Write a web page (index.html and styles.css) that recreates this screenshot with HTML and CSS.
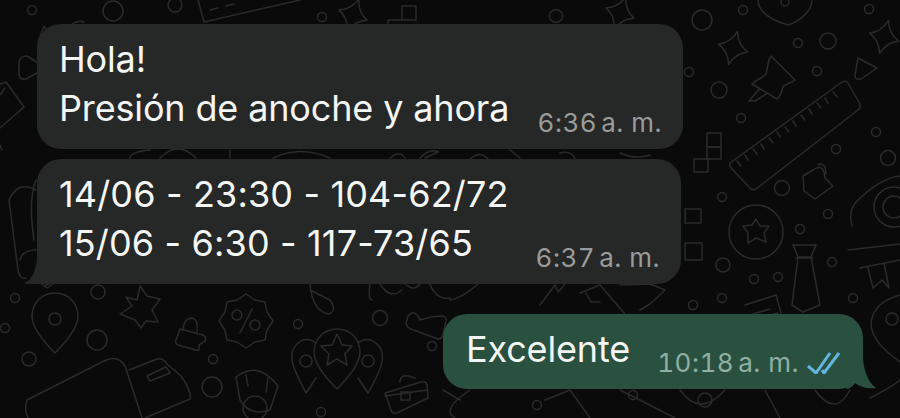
FILE: index.html
```html
<!DOCTYPE html>
<html lang="es">
  <head>
    <meta charset="UTF-8" />
    <meta name="viewport" content="width=device-width, initial-scale=1.0" />
    <title>Chat</title>
    <link rel="stylesheet" href="styles.css">
  </head>
  <body>
    <svg class="doodles" width="900" height="418" viewBox="0 0 900 418" fill="none" aria-hidden="true">
      <defs>
        <path id="sparkle" d="M0 -17 Q4 -4 15 0 Q4 4 0 17 Q-4 4 -15 0 Q-4 -4 0 -17Z" />
        <path id="drop" d="M0 -30 C14 -30 23 -19 23 -7 C23 6 10 20 0 30 C-10 20 -23 6 -23 -7 C-23 -19 -14 -30 0 -30Z" />
      </defs>
      <!-- small rings -->
      <circle cx="32" cy="10" r="4.5" />
      <circle cx="113" cy="11" r="10" />
      <circle cx="175" cy="5" r="7" />
      <circle cx="322" cy="17" r="4.5" />
      <circle cx="556" cy="16" r="6.5" />
      <circle cx="689" cy="72" r="4.5" />
      <circle cx="702" cy="20" r="10" />
      <circle cx="743" cy="10" r="4.5" />
      <circle cx="869" cy="9" r="4.5" />
      <circle cx="798" cy="43" r="4.5" />
      <circle cx="828" cy="41" r="8" />
      <circle cx="817" cy="71" r="4.5" />
      <circle cx="719" cy="90" r="8" />
      <circle cx="741" cy="118" r="4.5" />
      <circle cx="876" cy="132" r="4.5" />
      <circle cx="836" cy="149" r="4.5" />
      <circle cx="888" cy="158" r="7.5" />
      <circle cx="782" cy="188" r="7.5" />
      <circle cx="722" cy="197" r="4.5" />
      <circle cx="800" cy="229" r="4.5" />
      <circle cx="828" cy="214" r="4.5" />
      <circle cx="723" cy="265" r="7" />
      <circle cx="754" cy="279" r="4.5" />
      <circle cx="778" cy="277" r="4.5" />
      <circle cx="722" cy="298" r="4.5" />
      <circle cx="693" cy="305" r="4.5" />
      <circle cx="832" cy="262" r="4.5" />
      <circle cx="853" cy="298" r="4.5" />
      <circle cx="15" cy="298" r="4.5" />
      <circle cx="5" cy="328" r="4.5" />
      <circle cx="98" cy="292" r="7" />
      <circle cx="97" cy="340" r="10" />
      <circle cx="29" cy="359" r="7" />
      <circle cx="298" cy="324" r="4.5" />
      <circle cx="380" cy="318" r="7.5" />
      <circle cx="432" cy="346" r="4.5" />
      <circle cx="213" cy="359" r="4.5" />
      <circle cx="212" cy="387" r="10" />
      <circle cx="321" cy="412" r="4.5" />
      <circle cx="537" cy="405" r="4.5" />
      <circle cx="633" cy="395" r="4.5" />
      <!-- top row -->
      <path d="M198 0 L204 22 L300 0 M210 10 l8 -2 M226 6 l8 -2" />
      <rect x="402" y="6" width="14" height="14" />
      <path d="M402 20 h-14 v4" />
      <use href="#sparkle" transform="translate(353 15) rotate(20)" />
      <use href="#sparkle" transform="translate(620 13) rotate(20)" />
      <path d="M788 25 C778 22 758 15 758 0 M788 25 C798 22 812 12 812 0" />
      <circle cx="785" cy="2" r="4" />
      <!-- right column -->
      <use href="#sparkle" transform="translate(733 48) rotate(15)" />
      <use href="#sparkle" transform="translate(884 37) rotate(15)" />
      <path d="M771 56 L795 80 C790 84 785 84 783 87 C781 92 781 96 777 99 L752 84 C756 80 762 78 766 74 C768 68 767 62 771 56Z M760 88 L749 101 L755 101 L768 93" />
      <path d="M858 58 L877 68 L861 79 C856 80 855 78 855 75Z" />
      <path d="M730 163 L842 82 Q846 80 848 83 L860 104 Q861 108 858 110 L756 189 Q752 191 750 188 L731 168 Q729 165 730 163Z" />
      <path d="M737 158 l4 5 M745 152 l3 5 M753 146 l4 5 M761 141 l3 5 M769 135 l4 5 M777 129 l3 5 M785 124 l4 5 M793 118 l3 5 M801 112 l4 5 M809 106 l3 5 M817 100 l4 5 M825 95 l3 5 M833 89 l4 5" transform="translate(0 3)" />
      <rect x="707" y="133" width="14" height="14" />
      <rect x="707" y="147" width="14" height="12" />
      <rect x="694" y="159" width="14" height="13" />
      <rect x="685" y="209" width="16" height="14" />
      <rect x="685" y="243" width="17" height="17" />
      <path d="M803 176 L813 170 Q821 164 824 172 L825 178 L833 186 L815 199 L804 191 Z" />
      <path d="M818 165 Q821 162 825 167 L826 174" />
      <path d="M856 202 Q848 212 852 226 M856 202 Q880 178 900 176" />
      <circle cx="894" cy="207" r="20" />
      <circle cx="894" cy="207" r="11" />
      <circle cx="756" cy="232" r="27" />
      <path d="M756 219 L760 226 L769 226 L764 233 L766 242 L756 238 L748 243 L748 233 L743 226 L752 225Z" />
      <path d="M793 245 H816 L811 257 H798Z M798 257 L792 305 L803 312 L820 305 L811 257 M796 258 H813" />
      <path d="M745 305 L776 295 L781 313 M750 315 L770 309 M748 320 L778 313" />
      <path d="M848 250 L900 244 M860 268 L900 260 M868 268 L873 288 L882 280 L889 288 L884 263" />
      <path d="M900 295 C882 300 873 310 871 322 C870 340 890 355 900 362" />
      <circle cx="892" cy="319" r="6" />
      <!-- left column -->
      <path d="M27 56 L46 68 L26 79 Q20 80 19 75 L19 62 Q20 56 27 56Z" />
      <path d="M0 84 L6 82 L24 107 L0 128 M0 95 L5 88" />
      <path d="M0 145 L2 150" />
      <path d="M36 190 Q18 180 9 200 L18 270 Q20 280 26 278 M36 180 Q28 200 34 240 M36 250 Q22 250 20 260" />
      <!-- lower left -->
      <use href="#drop" x="55" y="323" />
      <circle cx="55" cy="319" r="6" />
      <path d="M140 286 L147 296 L160 299 L152 310 L158 322 L146 321 L141 328 L135 320 L120 314 L132 306 L126 297 L137 300Z" />
      <path d="M180 329 L203 335 Q207 337 205 341 L199 345 L199 349 Q199 351 196 350 L178 345 Q175 344 176 340Z" />
      <path d="M183 330 Q184 318 192 318 Q199 320 197 332" />
      <path d="M273 321 L267 330 L265 340 L255 342 L246 348 L237 342 L227 340 L225 330 L219 321 L225 312 L227 302 L237 300 L246 294 L255 300 L265 302 L267 312Z" />
      <circle cx="237" cy="315" r="5" />
      <circle cx="255" cy="325" r="5" />
      <path d="M252 309 L240 333" />
      <path d="M27 400 L104 361 Q118 354 125 366 L142 418 M27 400 Q24 410 28 418" />
      <path d="M129 370 L157 359 Q163 358 167 364 L181 376 Q192 392 190 399 L145 418 M147 376 L166 367 L170 373 L150 381Z" />
      <path d="M236 377 Q258 360 278 386 L270 410 Q250 417 240 400Z M246 375 L248 386 M268 378 L266 392" />
      <circle cx="255" cy="408" r="12" />
      <use href="#drop" x="337" y="359" />
      <path d="M337 334 L342 345 L352 346 L345 354 L347 365 L337 359 L327 365 L329 354 L321 346 L332 345Z" />
      <path d="M316 343 Q305 335 296 345 C286 355 295 372 306 393 L316 378 M358 343 Q368 335 378 345 C388 355 380 372 368 393 L358 378" />
      <circle cx="306" cy="361" r="6" />
      <circle cx="368" cy="361" r="6" />
      <path d="M385 393 L421 382 Q426 381 427 385 L428 398 L397 413 Q392 414 391 410Z M385 396 L427 390 M400 382 L400 380 Q402 375 408 376 L415 378" />
      <rect x="401" y="392" width="9" height="8" />
      <path d="M425 322 L436 319 L446 318 Q452 318 451 323 L448 336 Q447 341 443 341 L416 331 Q409 328 412 322 L413 318 Q420 310 425 322Z" transform="translate(-5 -2)" />
      <!-- under the first bubbles -->
      <path d="M53 40 L44 26 L38 42 M84 22 Q78 20 72 24" />
      <path d="M150 150 Q130 152 130 158 M160 158 Q178 140 196 158 M230 150 L230 158 M273 158 Q300 145 330 158 M390 158 Q400 150 405 158 M420 158 Q430 148 438 152 L425 158" />
      <path d="M470 159 Q480 150 488 159 M510 150 L520 158 M560 153 Q570 150 575 158 M620 153 Q635 160 650 155" />
      <path d="M40 283 L47 288 L62 278 L44 286" />
      <path d="M310 284 Q312 310 328 314 Q338 312 330 300 L310 290 M370 284 Q368 300 372 300 M380 284 Q390 300 402 290 M405 284 Q414 292 420 284 M430 284 Q436 300 450 298" />
      <path d="M540 305 L555 285 L558 292 L565 284 M450 300 Q462 298 478 284 M580 293 L600 285 L625 314 M586 293 L591 302 L600 302 M620 285 L650 284 L665 290 L650 304 L640 310" />
      <path d="M443 390 L460 400 M470 390 Q440 410 455 418 M590 418 L570 390 L545 400 M620 390 L640 400 L675 418 M680 390 Q700 418 725 390 M765 390 L780 418 M815 390 Q835 418 850 390 M870 398 Q890 388 900 380" />
      <circle cx="705" cy="400" r="7" />
    </svg>

    <main class="chat">
      <div class="msg msg-in msg-first">
        <p class="text">Hola!<br />Presión de anoche y ahora</p>
        <span class="time"><span>6:36</span> <span>a. m.</span></span>
      </div>
      <div class="msg msg-in msg-second">
        <p class="text nums">14/06 - 23:30 - 104-62/72<br />15/06 - 6:30 - 117-73/65</p>
        <span class="time"><span>6:37</span> <span>a. m.</span></span>
        <svg class="tail tail-in" width="18" height="24" viewBox="0 0 18 24"><path d="M0 23 Q10 20 13 0 H18 V24 H4 Q1 24 0 23Z" /></svg>
      </div>
      <div class="msg msg-out">
        <p class="text">Excelente</p>
        <span class="time"><span>10:18</span> <span>a. m.</span>
          <svg class="ticks" width="34" height="22" viewBox="0 0 34 22" fill="none">
            <path d="M1 14 L9 21 L23 1 M15 18 L17 21 L32 1" />
          </svg>
        </span>
        <svg class="tail tail-out" width="32" height="30" viewBox="0 0 32 30"><path d="M17 0 C18 12 22 23 30 29 C21 30 14 28 9 24 C6 28 3 30 0 30 Z" /></svg>
      </div>
    </main>
  </body>
</html>
```

FILE: styles.css
```css
body {
  margin: 0;
  height: 418px;
  overflow: hidden;
  position: relative;
  background-color: #0a0a0a;
  font-family: Inter, "Liberation Sans", sans-serif;
}

.doodles {
  position: absolute;
  top: 0;
  left: 0;
  stroke: #2b2b2b;
  stroke-width: 1.5;
  stroke-linejoin: round;
  stroke-linecap: round;
}

.chat {
  position: relative;
  display: flex;
  flex-direction: column;
  padding-top: 24px;
}

.msg {
  position: relative;
  box-sizing: border-box;
  display: flex;
  justify-content: space-between;
  align-items: flex-end;
  border-radius: 24px;
  padding-top: 11px;
  padding-bottom: 11px;
}

.msg-in {
  background-color: #262727;
  margin-left: 37px;
  height: 125px;
  padding-left: 22px;
  padding-right: 21px;
}

.msg-first {
  width: 646px;
  margin-bottom: 10px;
}

.msg-second {
  width: 644px;
  border-bottom-left-radius: 0;
  margin-bottom: 30px;
}

.msg-out {
  background-color: #2a5040;
  align-self: flex-start;
  margin-left: 443px;
  width: 420px;
  height: 75px;
  padding-left: 23px;
  padding-right: 22px;
}

.text {
  align-self: flex-start;
  margin: 0;
  font-size: 36px;
  line-height: 49px;
  letter-spacing: -0.15px;
  white-space: nowrap;
  color: #f4f5f5;
}

.nums {
  letter-spacing: 0.15px;
}

.time {
  display: flex;
  align-items: center;
  gap: 4px;
  font-size: 26px;
  line-height: 30px;
  letter-spacing: 0.5px;
  white-space: nowrap;
  font-variant-numeric: tabular-nums;
  color: #9a9b9b;
}

.msg-out .time {
  color: #8fb0a2;
}

.ticks {
  margin-left: 4px;
  stroke: #62b5de;
  stroke-width: 3;
}

.tail {
  position: absolute;
  bottom: 0;
}

.tail-in {
  left: -13px;
  fill: #262727;
}

.tail-out {
  right: -15px;
  fill: #2a5040;
}
```
